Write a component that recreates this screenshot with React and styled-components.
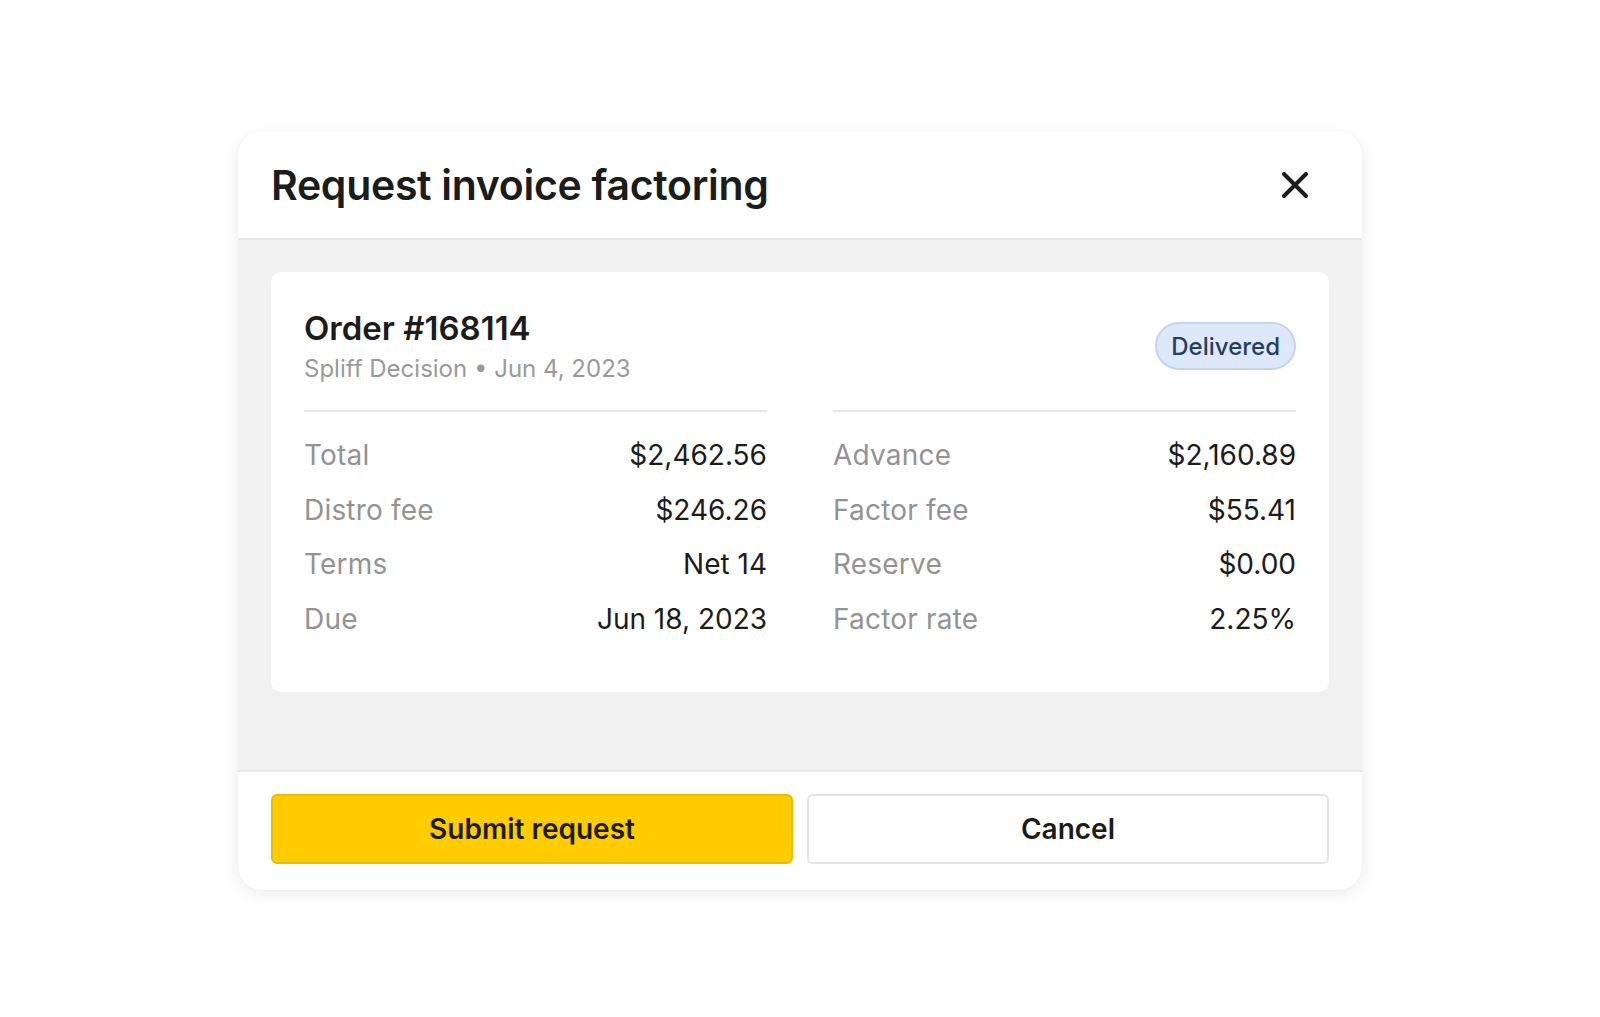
import styled, { createGlobalStyle } from "styled-components";
import { X } from "lucide-react";

const GlobalStyle = createGlobalStyle`
  body {
    margin: 0;
    background: #fff;
    font-family: Inter, "Noto Sans", sans-serif;
    color: #1c1c1c;
  }
`;

const Page = styled.div`
  min-height: 1017px;
  padding: 131px 0 0 238px;
  box-sizing: border-box;
`;

const Modal = styled.div`
  width: 1124px;
  background: #fff;
  border-radius: 24px;
  box-shadow: 0 4px 18px rgba(0, 0, 0, 0.08), 0 0 2px rgba(0, 0, 0, 0.04);
  overflow: hidden;
`;

const Header = styled.div`
  height: 109px;
  box-sizing: border-box;
  padding: 0 45px 0 33px;
  display: flex;
  align-items: center;
  justify-content: space-between;
  border-bottom: 2px solid #e6e6e6;
`;

const Title = styled.h2`
  margin: 0;
  font-size: 41px;
  font-weight: 600;
  letter-spacing: -0.3px;
  color: #1c1c1c;
`;

const CloseButton = styled.button`
  border: none;
  background: none;
  padding: 0;
  display: flex;
  color: #1c1c1c;
  cursor: pointer;
`;

const Body = styled.div`
  background: #f1f1f1;
  padding: 32px 33px 78px;
  border-bottom: 2px solid #e6e6e6;
`;

const Card = styled.div`
  background: #fff;
  border-radius: 10px;
  padding: 36px 33px 55px;
`;

const CardTop = styled.div`
  display: flex;
  justify-content: space-between;
  align-items: center;
  padding-bottom: 26px;
`;

const OrderTitle = styled.h3`
  margin: 0;
  font-size: 33px;
  font-weight: 600;
  color: #1c1c1c;
  line-height: 40px;
`;

const OrderMeta = styled.div`
  margin-top: 6px;
  font-size: 24px;
  color: #9a9a9a;
  line-height: 30px;
`;

const Badge = styled.span`
  display: inline-flex;
  align-items: center;
  height: 48px;
  box-sizing: border-box;
  padding: 0 14px;
  border-radius: 999px;
  background: #dde9fb;
  border: 2px solid #c3d5ee;
  color: #24405f;
  font-size: 24px;
  font-weight: 500;
`;

const Columns = styled.div`
  display: grid;
  grid-template-columns: 1fr 1fr;
  gap: 66px;
`;

const Column = styled.div`
  border-top: 2px solid #e6e6e6;
  padding-top: 25px;
  display: flex;
  flex-direction: column;
  gap: 18.5px;
`;

const Row = styled.div`
  display: flex;
  justify-content: space-between;
  font-size: 28px;
  line-height: 36px;
`;

const Label = styled.span`
  color: #939393;
  letter-spacing: 0.2px;
`;

const Value = styled.span`
  color: #1c1c1c;
`;

const Footer = styled.div`
  display: grid;
  grid-template-columns: 1fr 1fr;
  gap: 14px;
  padding: 22px 33px 26px;
`;

const Button = styled.button`
  height: 70px;
  border-radius: 6px;
  font-family: inherit;
  font-size: 28px;
  font-weight: 600;
  color: #1c1c1c;
  cursor: pointer;
  background: ${(p) => (p.$primary ? "#ffcc00" : "#fff")};
  border: 2px solid ${(p) => (p.$primary ? "#e8bc00" : "#e4e4e4")};
`;

const left = [
  ["Total", "$2,462.56"],
  ["Distro fee", "$246.26"],
  ["Terms", "Net 14"],
  ["Due", "Jun 18, 2023"],
];

const right = [
  ["Advance", "$2,160.89"],
  ["Factor fee", "$55.41"],
  ["Reserve", "$0.00"],
  ["Factor rate", "2.25%"],
];

function DetailColumn({ rows }) {
  return (
    <Column>
      {rows.map(([label, value]) => (
        <Row key={label}>
          <Label>{label}</Label>
          <Value>{value}</Value>
        </Row>
      ))}
    </Column>
  );
}

export default function App() {
  return (
    <Page>
      <GlobalStyle />
      <Modal>
        <Header>
          <Title>Request invoice factoring</Title>
          <CloseButton aria-label="Close">
            <X size={44} strokeWidth={2.2} />
          </CloseButton>
        </Header>
        <Body>
          <Card>
            <CardTop>
              <div>
                <OrderTitle>Order #168114</OrderTitle>
                <OrderMeta>Spliff Decision • Jun 4, 2023</OrderMeta>
              </div>
              <Badge>Delivered</Badge>
            </CardTop>
            <Columns>
              <DetailColumn rows={left} />
              <DetailColumn rows={right} />
            </Columns>
          </Card>
        </Body>
        <Footer>
          <Button $primary>Submit request</Button>
          <Button>Cancel</Button>
        </Footer>
      </Modal>
    </Page>
  );
}
